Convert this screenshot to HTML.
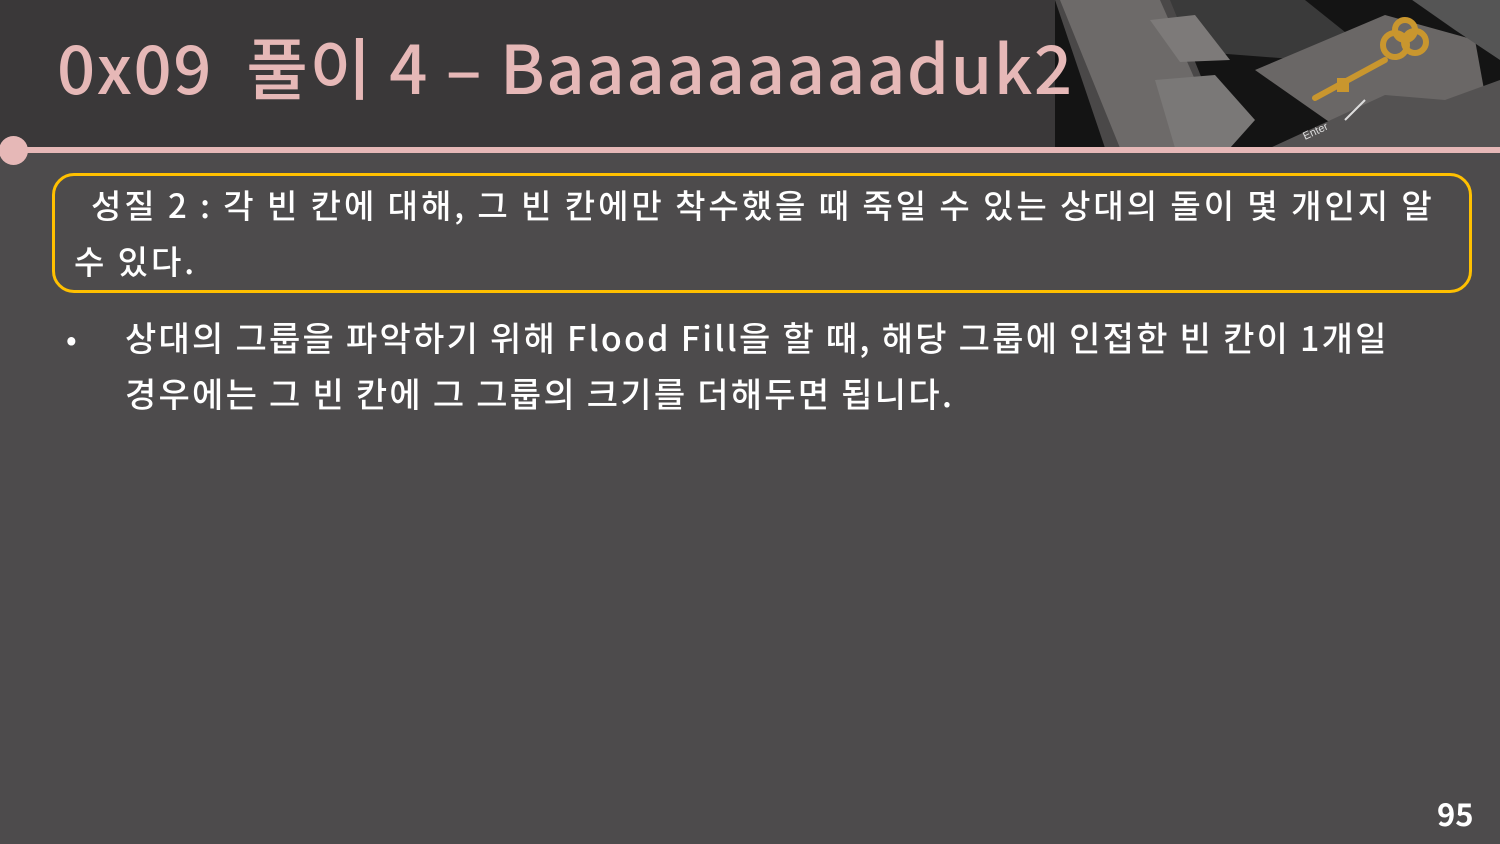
<!DOCTYPE html>
<html><head><meta charset="utf-8"><style>
body{margin:0;width:1500px;height:844px;background:#4d4b4c;position:relative;overflow:hidden;font-family:"Liberation Sans","Noto Sans CJK KR",sans-serif;}
.hdr{position:absolute;left:0;top:0;width:1500px;height:148px;background:#3a3839;}
.title{position:absolute;left:57px;top:32px;font-family:"Noto Sans CJK KR",sans-serif;font-weight:500;font-size:67px;color:#e6b8b7;white-space:nowrap;line-height:1;letter-spacing:1.55px;}
.line{position:absolute;left:0;top:147px;width:1500px;height:6px;background:#e6b8b7;}
.dot{position:absolute;left:-1px;top:136px;width:29px;height:29px;border-radius:50%;background:#e6b8b7;}
.box{position:absolute;left:52px;top:173px;width:1414px;height:114px;border:3px solid #ffc000;border-radius:22px;}
.t{position:absolute;color:#fff;font-family:"Noto Sans CJK KR",sans-serif;font-weight:500;white-space:nowrap;line-height:1;}
</style></head><body>
<div class="hdr"></div>
<svg style="position:absolute;left:1055px;top:0" width="445" height="148" viewBox="0 0 445 148">
<rect width="445" height="148" fill="#141414"/>
<path d="M110 0 L250 0 L300 40 L250 60 L120 50 Z" fill="#3a3a3a"/>
<path d="M200 70 L330 15 L420 40 L430 95 L300 140 Z" fill="#6a6766"/>
<path d="M350 -5 L445 -5 L445 60 L400 30 Z" fill="#555"/>
<path d="M215 148 L330 95 L390 100 L445 80 L445 148 Z" fill="#545252"/>
<path d="M0 0 L115 0 L175 148 L50 148 Z" fill="#4a4848"/>
<path d="M5 0 L105 0 L170 148 L65 148 Z" fill="#8a8785" opacity="0.55"/>
<path d="M100 80 L160 75 L200 120 L175 148 L120 148 Z" fill="#7a7877"/>
<path d="M95 20 L140 15 L175 60 L125 62 Z" fill="#7d7a79"/>
<g fill="none" stroke="#c9962e" stroke-width="6" stroke-linecap="round">
<path d="M260 98 L330 60"/>
<circle cx="340" cy="45" r="12"/><circle cx="360" cy="42" r="11"/><circle cx="350" cy="30" r="10"/>
</g>
<rect x="282" y="78" width="12" height="14" fill="#c9962e"/>
<path d="M290 120 L310 100" stroke="#ddd" stroke-width="2"/>
<text x="250" y="140" fill="#ddd" font-size="11" transform="rotate(-25 250 140)" font-family="Liberation Sans">Enter</text>
</svg>
<div class="title">0x09&nbsp; 풀이 4 – Baaaaaaaaaduk2</div>
<div class="line"></div><div class="dot"></div>
<div class="box"></div>
<div class="t" style="left:91px;top:188px;font-size:33px;letter-spacing:2.95px;">성질 2 : 각 빈 칸에 대해, 그 빈 칸에만 착수했을 때 죽일 수 있는 상대의 돌이 몇 개인지 알</div>
<div class="t" style="left:74px;top:244px;font-size:33px;letter-spacing:2.95px;">수 있다.</div>
<div class="t" style="left:66px;top:322px;font-size:30px;">•</div>
<div class="t" style="left:125px;top:320px;font-size:34px;letter-spacing:2.25px;">상대의 그룹을 파악하기 위해 Flood Fill을 할 때, 해당 그룹에 인접한 빈 칸이 1개일</div>
<div class="t" style="left:125px;top:376px;font-size:34px;letter-spacing:2.25px;">경우에는 그 빈 칸에 그 그룹의 크기를 더해두면 됩니다.</div>
<div class="t" style="left:1437px;top:797px;font-size:31px;font-weight:bold;">95</div>
</body></html>
